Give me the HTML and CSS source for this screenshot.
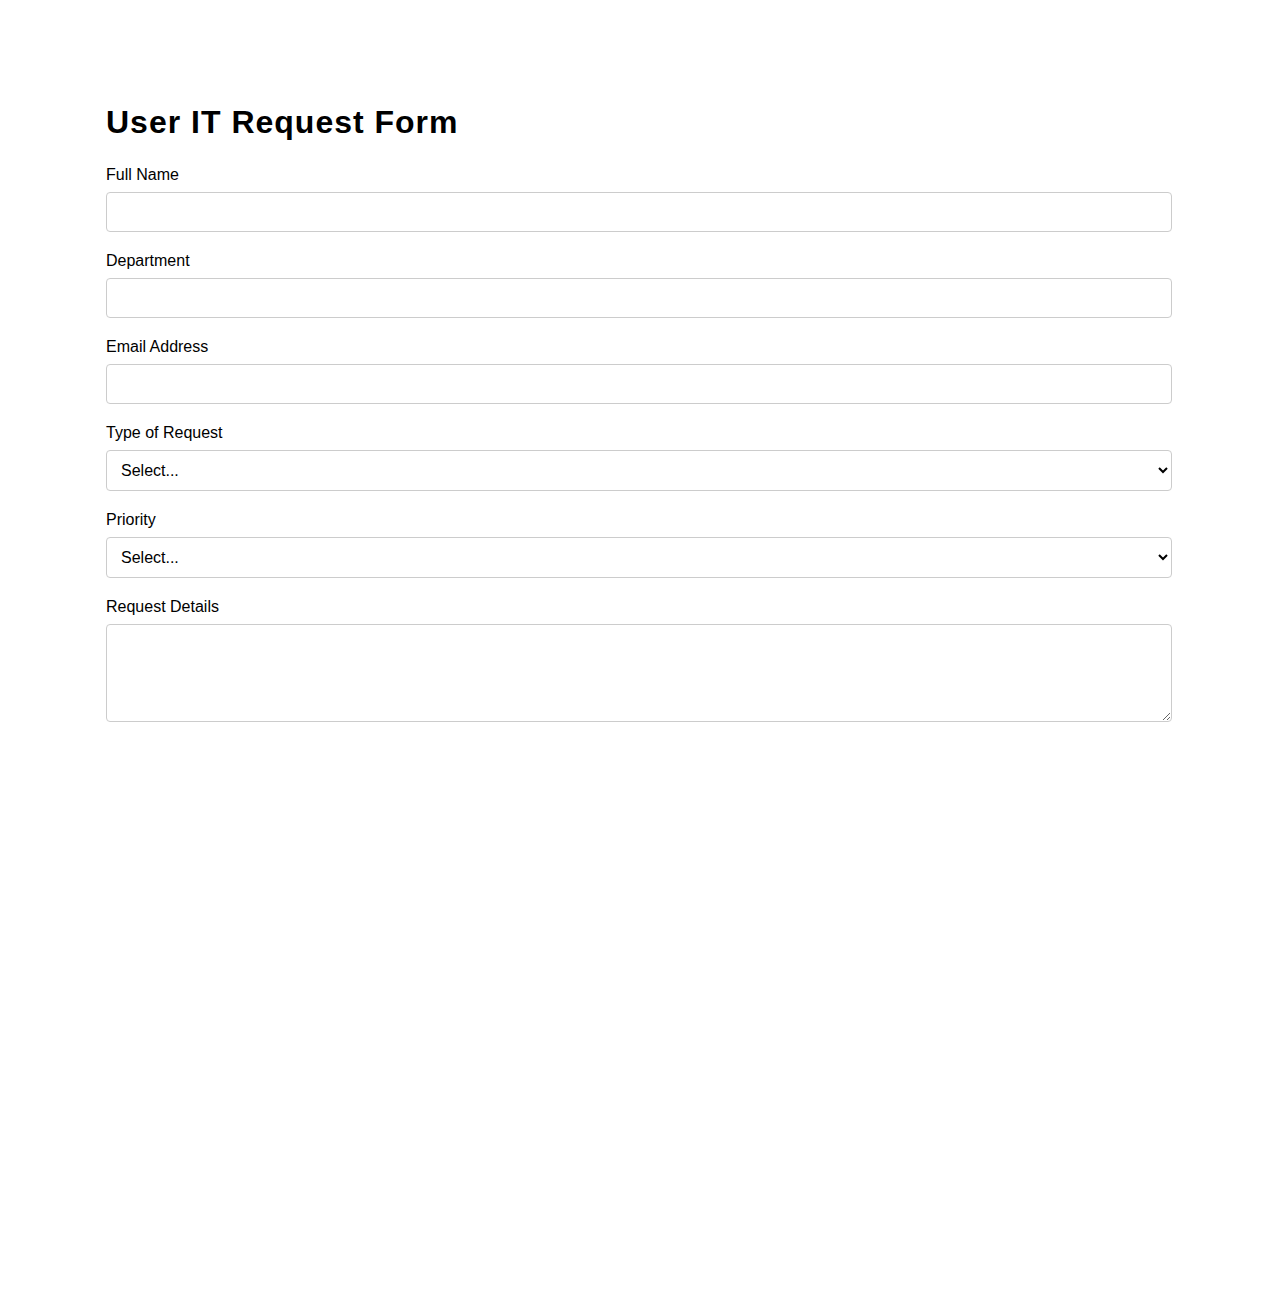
FILE: index.html
```html
<!DOCTYPE html>
<html lang="en">
<head>
    <meta charset="UTF-8">
    <meta name="viewport" content="width=device-width, initial-scale=1.0">
    <title>User IT Request Form</title>
    <link rel="stylesheet" href="styles.css">
</head>
<body>
    <main class="page">
        <h1>User IT Request Form</h1>

        <form class="request-form">
            <div class="field">
                <label for="full-name">Full Name</label>
                <input type="text" id="full-name" name="fullName">
            </div>

            <div class="field">
                <label for="department">Department</label>
                <input type="text" id="department" name="department">
            </div>

            <div class="field">
                <label for="email">Email Address</label>
                <input type="email" id="email" name="email">
            </div>

            <div class="field">
                <label for="request-type">Type of Request</label>
                <select id="request-type" name="requestType">
                    <option value="">Select...</option>
                    <option>Hardware</option>
                    <option>Software</option>
                    <option>Network</option>
                    <option>Account Access</option>
                </select>
            </div>

            <div class="field">
                <label for="priority">Priority</label>
                <select id="priority" name="priority">
                    <option value="">Select...</option>
                    <option>Low</option>
                    <option>Medium</option>
                    <option>High</option>
                </select>
            </div>

            <div class="field">
                <label for="details">Request Details</label>
                <textarea id="details" name="details"></textarea>
            </div>
        </form>
    </main>
</body>
</html>
```

FILE: styles.css
```css
/* General Reset */
* {
    box-sizing: border-box;
}

body {
    margin: 0;
    font-family: "Liberation Sans", Arial, sans-serif;
    color: #000;
    background: #fff;
}

.page {
    padding: 104px 106px 40px;
}

h1 {
    margin: 0 0 25px;
    font-size: 32px;
    letter-spacing: 1px;
}

/* Form fields */
.field {
    margin-bottom: 20px;
}

.field label {
    display: block;
    margin-bottom: 8px;
    font-size: 16px;
}

.field input,
.field select,
.field textarea {
    display: block;
    width: 100%;
    padding: 10px;
    border: 1px solid #ccc;
    border-radius: 4px;
    font-family: inherit;
    font-size: 16px;
    background: #fff;
    color: #000;
}

.field input {
    height: 40px;
}

.field select {
    height: 41px;
}

.field textarea {
    height: 98px;
}
```
